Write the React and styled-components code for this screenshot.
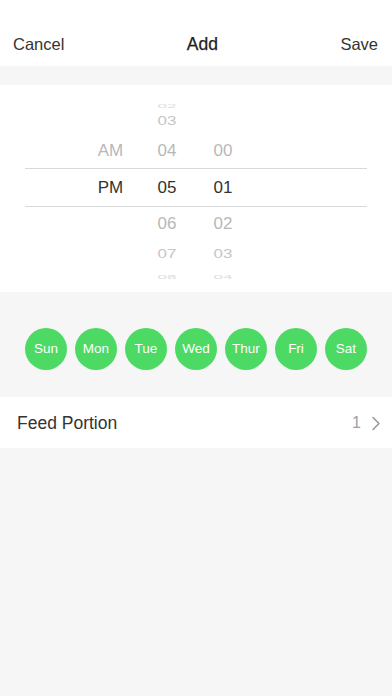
import styled, { createGlobalStyle } from "styled-components";

const GlobalStyle = createGlobalStyle`
  html, body {
    margin: 0;
    padding: 0;
    background: #f6f6f6;
    font-family: "Liberation Sans", Arial, sans-serif;
  }
  * { box-sizing: border-box; }
`;

const Page = styled.div`
  width: 392px;
  min-height: 696px;
  background: #f6f6f6;
  display: flex;
  flex-direction: column;
`;

const Header = styled.header`
  height: 66px;
  padding: 22px 14px 0 13px;
  background: #fff;
  display: flex;
  align-items: center;
  justify-content: space-between;
  font-size: 16.5px;
  color: #333;
`;

const HeaderButton = styled.span`
  cursor: pointer;
`;

const Title = styled.span`
  font-size: 17.5px;
  color: #222;
  -webkit-text-stroke: 0.25px #222;
`;

const Picker = styled.section`
  margin-top: 19px;
  background: #fff;
  padding: 11px 0 13px;
  display: flex;
  flex-direction: column;
`;

const Row = styled.div`
  height: ${(p) => p.$h}px;
  margin: 0 25px;
  display: grid;
  grid-template-columns: 57px 56px 56px 57px;
  justify-content: start;
  padding-left: 57px;
  align-items: center;
  ${(p) =>
    p.$selected &&
    `
    border-top: 1px solid #d9d9d9;
    border-bottom: 1px solid #d9d9d9;
  `}
`;

const Cell = styled.span`
  text-align: center;
  font-family: "Liberation Sans", Arial, sans-serif;
  font-size: 17px;
  line-height: 20px;
  color: ${(p) => p.$color};
  transform: scaleY(${(p) => p.$scale});
`;

const DayBand = styled.section`
  height: 105px;
  display: flex;
  align-items: center;
  justify-content: center;
  gap: 8px;
  padding-top: 8px;
`;

const Day = styled.div`
  width: 42px;
  height: 42px;
  border-radius: 50%;
  background: #4cd964;
  color: #fff;
  font-size: 13.5px;
  display: flex;
  align-items: center;
  justify-content: center;
`;

const SettingRow = styled.div`
  height: 51px;
  background: #fff;
  display: flex;
  align-items: center;
  justify-content: space-between;
  padding: 1px 11px 0 17px;
`;

const SettingLabel = styled.span`
  font-size: 17.5px;
  color: #333;
`;

const SettingValue = styled.span`
  display: flex;
  align-items: center;
  gap: 10px;
  font-size: 16px;
  color: #a0a0a0;
`;

const rows = [
  { h: 12, scale: 0.35, color: "#dcdcdc", cells: ["", "02", ""] },
  { h: 26, scale: 0.72, color: "#c6c6c6", cells: ["", "03", ""] },
  { h: 34, scale: 0.95, color: "#b8b8b8", cells: ["AM", "04", "00"] },
  { h: 39, scale: 1, color: "#333", cells: ["PM", "05", "01"], selected: true },
  { h: 34, scale: 0.95, color: "#b8b8b8", cells: ["", "06", "02"] },
  { h: 26, scale: 0.72, color: "#c6c6c6", cells: ["", "07", "03"] },
  { h: 12, scale: 0.35, color: "#dcdcdc", cells: ["", "08", "04"] },
];

const days = ["Sun", "Mon", "Tue", "Wed", "Thur", "Fri", "Sat"];

const Chevron = () => (
  <svg width="10" height="15" viewBox="0 0 10 15" fill="none">
    <path d="M2 1.5 L8 7.5 L2 13.5" stroke="#9a9a9a" strokeWidth="1.6" strokeLinecap="round" strokeLinejoin="round" />
  </svg>
);

export default function App() {
  return (
    <Page>
      <GlobalStyle />
      <Header>
        <HeaderButton>Cancel</HeaderButton>
        <Title>Add</Title>
        <HeaderButton>Save</HeaderButton>
      </Header>
      <Picker>
        {rows.map((r, i) => (
          <Row key={i} $h={r.h} $selected={r.selected}>
            {r.cells.map((c, j) => (
              <Cell key={j} $color={r.color} $scale={r.scale}>
                {c}
              </Cell>
            ))}
          </Row>
        ))}
      </Picker>
      <DayBand>
        {days.map((d) => (
          <Day key={d}>{d}</Day>
        ))}
      </DayBand>
      <SettingRow>
        <SettingLabel>Feed Portion</SettingLabel>
        <SettingValue>
          1
          <Chevron />
        </SettingValue>
      </SettingRow>
    </Page>
  );
}
